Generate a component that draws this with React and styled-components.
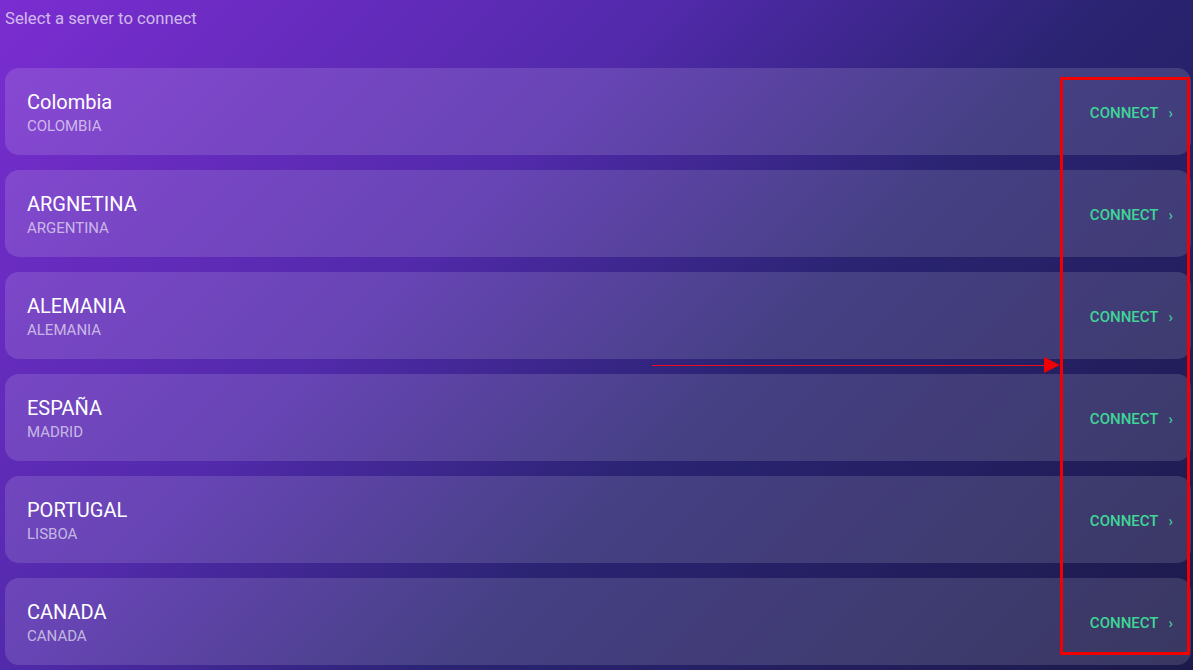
import styled, { createGlobalStyle } from 'styled-components'

const servers = [
	{ name: 'Colombia', city: 'COLOMBIA' },
	{ name: 'ARGNETINA', city: 'ARGENTINA' },
	{ name: 'ALEMANIA', city: 'ALEMANIA' },
	{ name: 'ESPAÑA', city: 'MADRID' },
	{ name: 'PORTUGAL', city: 'LISBOA' },
	{ name: 'CANADA', city: 'CANADA' }
]

const App = () => {
	return (
		<>
			<GlobalStyle />
			<Page>
				<Header>Select a server to connect</Header>
				<List>
					{servers.map((server) => (
						<Card key={server.name}>
							<Info>
								<Name>{server.name}</Name>
								<City>{server.city}</City>
							</Info>
							<Connect>
								CONNECT <Chevron>›</Chevron>
							</Connect>
						</Card>
					))}
				</List>
				<Highlight />
				<Arrow>
					<ArrowLine />
					<ArrowHead />
				</Arrow>
			</Page>
		</>
	)
}

export default App

const GlobalStyle = createGlobalStyle`
	html, body {
		margin: 0;
		padding: 0;
		background: #1c1a4a;
	}
	body {
		font-family: Roboto, 'Liberation Sans', sans-serif;
	}
`

const Page = styled.div`
	position: relative;
	width: 1193px;
	height: 670px;
	overflow: hidden;
	box-sizing: border-box;
	padding: 9px 2px 0 5px;
	background: linear-gradient(
		135deg,
		#7b2dd1 0%,
		#522aab 36%,
		#2a2472 60%,
		#1c1a4a 100%
	);
`

const Header = styled.div`
	font-size: 16.7px;
	line-height: 20px;
	color: rgba(255, 255, 255, 0.68);
`

const List = styled.div`
	display: flex;
	flex-direction: column;
	gap: 15px;
	margin-top: 39px;
`

const Card = styled.div`
	display: flex;
	align-items: center;
	justify-content: space-between;
	height: 87px;
	box-sizing: border-box;
	padding: 0 18px 0 22px;
	border-radius: 14px;
	background: rgba(255, 255, 255, 0.13);
`

const Info = styled.div`
	display: flex;
	flex-direction: column;
	gap: 3px;
	margin-top: 2px;
`

const Name = styled.div`
	font-size: 20px;
	line-height: 24px;
	color: #ffffff;
`

const City = styled.div`
	font-size: 15px;
	line-height: 18px;
	color: rgba(255, 255, 255, 0.62);
`

const Connect = styled.div`
	display: flex;
	align-items: center;
	gap: 6px;
	font-size: 15px;
	font-weight: 500;
	color: #3fd596;
	margin-top: 3px;
`

const Chevron = styled.span`
	font-size: 15px;
	margin-left: 4px;
`

const Highlight = styled.div`
	position: absolute;
	left: 1060px;
	top: 77px;
	width: 130px;
	height: 578px;
	box-sizing: border-box;
	border: 3px solid #f00000;
`

const Arrow = styled.div`
	position: absolute;
	left: 652px;
	top: 357px;
	width: 408px;
	height: 16px;
	display: flex;
	align-items: center;
`

const ArrowLine = styled.div`
	flex: 1;
	height: 1px;
	background: #e8101a;
`

const ArrowHead = styled.div`
	width: 0;
	height: 0;
	border-top: 8px solid transparent;
	border-bottom: 8px solid transparent;
	border-left: 16px solid #f00000;
`
